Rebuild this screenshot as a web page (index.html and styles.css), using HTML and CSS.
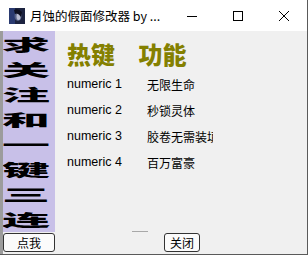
FILE: index.html
```html
<!DOCTYPE html>
<html>
<head>
  <meta charset="UTF-8">
  <title>月蚀的假面修改器</title>
  <link rel="stylesheet" href="styles.css">
</head>
<body>
  <div class="window">
    <div class="titlebar">
      <svg class="app-icon" width="16" height="16" viewBox="0 0 16 16">
        <rect width="16" height="16" fill="#1c2340"/>
        <rect x="0" y="0" width="6" height="16" fill="#2a3a70"/>
        <ellipse cx="9" cy="8" rx="3.5" ry="5" fill="#5a6488"/>
        <ellipse cx="9.5" cy="8.5" rx="2" ry="3.5" fill="#b8bcd0"/>
        <path d="M5 2 Q9 0 13 4 L12 9 Q9 4 6 6 Z" fill="#0e1020"/>
      </svg>
      <span class="title">月蚀的假面修改器 by ...</span>
      <div class="controls">
        <span class="ctl">
          <svg width="10" height="10" viewBox="0 0 10 10"><path d="M0 5.5h10" stroke="#000" stroke-width="1"/></svg>
        </span>
        <span class="ctl">
          <svg width="10" height="10" viewBox="0 0 10 10"><rect x="0.5" y="0.5" width="9" height="9" fill="none" stroke="#000" stroke-width="1"/></svg>
        </span>
        <span class="ctl">
          <svg width="10" height="10" viewBox="0 0 10 10"><path d="M0 0L10 10M10 0L0 10" stroke="#000" stroke-width="1"/></svg>
        </span>
      </div>
    </div>
    <div class="content">
      <div class="side">
        <div class="banner">
          <div class="big">求</div>
          <div class="big">关</div>
          <div class="big">注</div>
          <div class="big">和</div>
          <div class="big">一</div>
          <div class="big">键</div>
          <div class="big">三</div>
          <div class="big">连</div>
        </div>
        <button class="btn btn-wide">点我</button>
      </div>
      <div class="main">
        <div class="heading">
          <span>热键</span>
          <span class="head-func">功能</span>
        </div>
        <div class="row"><span class="key">numeric 1</span><span class="func">无限生命</span></div>
        <div class="row"><span class="key">numeric 2</span><span class="func">秒锁灵体</span></div>
        <div class="row"><span class="key">numeric 3</span><span class="func">胶卷无需装填</span></div>
        <div class="row"><span class="key">numeric 4</span><span class="func">百万富豪</span></div>
        <div class="spacer"></div>
        <div class="grip"></div>
        <div class="footer">
          <button class="btn">关闭</button>
        </div>
      </div>
    </div>
  </div>
</body>
</html>
```

FILE: styles.css
```css
body {
  margin: 0;
  padding: 0;
  background-color: #f0f0f0;
  font-family: "Noto Sans", "Noto Sans CJK SC", sans-serif;
}

.window {
  width: 307px;
  height: 254px;
  border-right: 1px solid #5a5a5a;
  border-bottom: 1px solid #5a5a5a;
  display: flex;
  flex-direction: column;
  background-color: #f0f0f0;
}

.titlebar {
  height: 31px;
  background-color: #fff;
  display: flex;
  align-items: center;
}

.app-icon {
  margin-left: 9px;
  margin-right: 5px;
  flex: none;
}

.title {
  font-size: 12.5px;
  color: #000;
  font-family: "Noto Sans CJK SC", sans-serif;
  white-space: nowrap;
}

.controls {
  margin-left: auto;
  display: flex;
}

.ctl {
  width: 46px;
  height: 31px;
  display: flex;
  align-items: center;
  justify-content: center;
}

.content {
  flex: 1;
  display: flex;
  min-height: 0;
}

.side {
  width: 55px;
  display: flex;
  flex-direction: column;
  border-left: 3px solid #9c9c9c;
  box-sizing: border-box;
}

.banner {
  flex: 1;
  background-color: #c8c0e8;
  overflow: hidden;
  padding-top: 1px;
}

.big {
  font-family: "Noto Sans CJK SC", sans-serif;
  font-weight: 900;
  font-size: 20px;
  line-height: 25px;
  height: 25px;
  text-align: center;
  color: #000;
  transform: scale(2.4, 0.82);
  margin-left: -6px;
}

.btn {
  font-family: "Noto Sans CJK SC", sans-serif;
  font-size: 12px;
  background-color: #fbfbfb;
  border: 1px solid #333;
  border-radius: 3px;
  padding: 0 5px;
  height: 19px;
  line-height: 16px;
  color: #000;
  margin: 1px 0 2px 0;
}

.btn-wide {
  width: 52px;
}

.main {
  flex: 1;
  display: flex;
  flex-direction: column;
  padding-left: 12px;
}

.heading {
  font-family: "Noto Sans CJK SC", sans-serif;
  font-weight: 900;
  font-size: 24px;
  line-height: 30px;
  color: #848000;
  margin-top: 8px;
  margin-bottom: 2px;
}

.head-func {
  margin-left: 18px;
}

.row {
  display: flex;
  height: 26px;
  align-items: center;
  font-size: 12px;
  color: #000;
}

.row:first-of-type {
  height: 25px;
}

.key {
  width: 80px;
  font-family: "Liberation Sans", sans-serif;
  font-size: 12.5px;
}

.func {
  width: 66px;
  overflow: hidden;
  white-space: nowrap;
  font-family: "Noto Sans CJK SC", sans-serif;
}

.spacer {
  flex: 1;
}

.grip {
  width: 16px;
  height: 1px;
  background-color: #a8a8a8;
  margin-left: 65px;
}

.footer {
  display: flex;
  padding-left: 97px;
}
```
